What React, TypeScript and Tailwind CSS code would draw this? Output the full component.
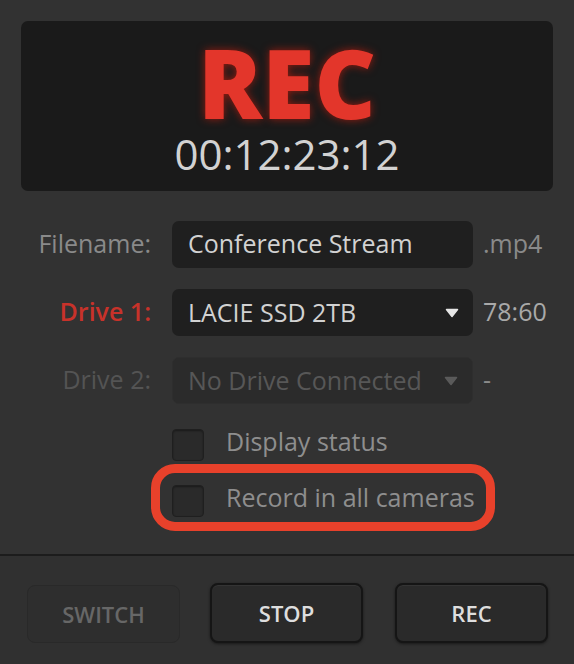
import React from 'react';

const Caret = ({ dim = false }: { dim?: boolean }) => (
  <svg width="14" height="10" viewBox="0 0 14 10" className="shrink-0">
    <path d="M1.5 1.5 L12.5 1.5 L7 8.5 Z" fill={dim ? '#5a5a5a' : '#e6e6e6'} stroke={dim ? '#5a5a5a' : '#e6e6e6'} strokeWidth="1.5" strokeLinejoin="round" />
  </svg>
);

const Row = ({ label, labelClass, children, suffix, suffixClass }: { label: string; labelClass: string; children: React.ReactNode; suffix: string; suffixClass: string }) => (
  <div className="flex items-center h-[47px]">
    <div className={`w-[151px] text-right text-[25px] pb-[2px] ${labelClass}`}>{label}</div>
    <div className="ml-[21px] w-[301px] h-full">{children}</div>
    <div className={`ml-[10px] text-[25px] pb-[2px] ${suffixClass}`}>{suffix}</div>
  </div>
);

const Checkbox = ({ label }: { label: string }) => (
  <div className="flex items-center h-[32px]">
    <div className="w-[32px] h-[32px] rounded-[4px] bg-[#2a2a2a] border border-[#1f1f1f] shadow-[inset_0_1px_2px_rgba(0,0,0,0.4)]" />
    <span className="ml-[22px] pb-[7px] text-[25px] text-[#8e8e8e]">{label}</span>
  </div>
);

export default function App() {
  return (
    <div className="w-[574px] h-[664px] bg-[#323232] flex flex-col" style={{ fontFamily: '"Open Sans", "Noto Sans", sans-serif' }}>
      <div className="px-[21px] pt-[21px]">
        <div className="h-[170px] rounded-[7px] bg-[#1a1a1a] flex flex-col items-center pt-[14px]">
          <div className="text-[95px] leading-none font-extrabold text-[#e3362b] [text-shadow:0_0_8px_rgba(255,30,10,0.55)]">REC</div>
          <div className="mt-[3px] text-[42px] leading-none text-[#d2d2d2]">00:12:23:12</div>
        </div>
      </div>

      <div className="mt-[30px] flex flex-col gap-[21px]">
        <Row label="Filename:" labelClass="text-[#8a8a8a]" suffix=".mp4" suffixClass="text-[#8a8a8a]">
          <div className="h-full rounded-[7px] bg-[#1f1f1f] flex items-center px-[16px] pb-[2px] text-[25px] text-[#d2d2d2]">Conference Stream</div>
        </Row>
        <Row label="Drive 1:" labelClass="text-[#c8322a] font-semibold" suffix="78:60" suffixClass="text-[#a9a9a9]">
          <div className="h-full rounded-[7px] bg-[#1f1f1f] flex items-center justify-between pl-[16px] pr-[14px] text-[25px] text-[#d2d2d2]">
            <span>LACIE SSD 2TB</span>
            <Caret />
          </div>
        </Row>
        <Row label="Drive 2:" labelClass="text-[#545454]" suffix="-" suffixClass="text-[#8a8a8a]">
          <div className="h-full rounded-[7px] bg-[#2b2b2b] border border-[#2e2e2e] flex items-center justify-between pl-[15px] pr-[14px] text-[25px] text-[#575757]">
            <span>No Drive Connected</span>
            <Caret dim />
          </div>
        </Row>
      </div>

      <div className="mt-[25px] ml-[172px] flex flex-col gap-[24px]">
        <Checkbox label="Display status" />
        <div className="relative">
          <div className="absolute left-[-21px] top-[-21px] w-[344px] h-[67px] rounded-[24px] border-[9px] border-[#e8412b]" />
          <Checkbox label="Record in all cameras" />
        </div>
      </div>

      <div className="mt-[37px] h-[2px] bg-[#1c1c1c]" />

      <div className="flex-1 bg-[#303030] flex items-start pt-[27px] pl-[27px] gap-[30px]">
        <div className="w-[153px] h-[58px] mt-[2px] rounded-[8px] bg-[#2e2e2e] border border-[#292929] flex items-center justify-center text-[22px] font-semibold text-[#676767]">SWITCH</div>
        <div className="w-[153px] h-[60px] rounded-[8px] bg-[#2a2a2a] border-2 border-[#151515] shadow-[0_1px_3px_rgba(0,0,0,0.5),inset_0_1px_0_rgba(255,255,255,0.05)] flex items-center justify-center text-[22px] font-semibold text-[#dedede]">STOP</div>
        <div className="w-[153px] h-[60px] ml-[2px] rounded-[8px] bg-[#2a2a2a] border-2 border-[#151515] shadow-[0_1px_3px_rgba(0,0,0,0.5),inset_0_1px_0_rgba(255,255,255,0.05)] flex items-center justify-center text-[22px] font-semibold text-[#dedede]">REC</div>
      </div>
    </div>
  );
}
